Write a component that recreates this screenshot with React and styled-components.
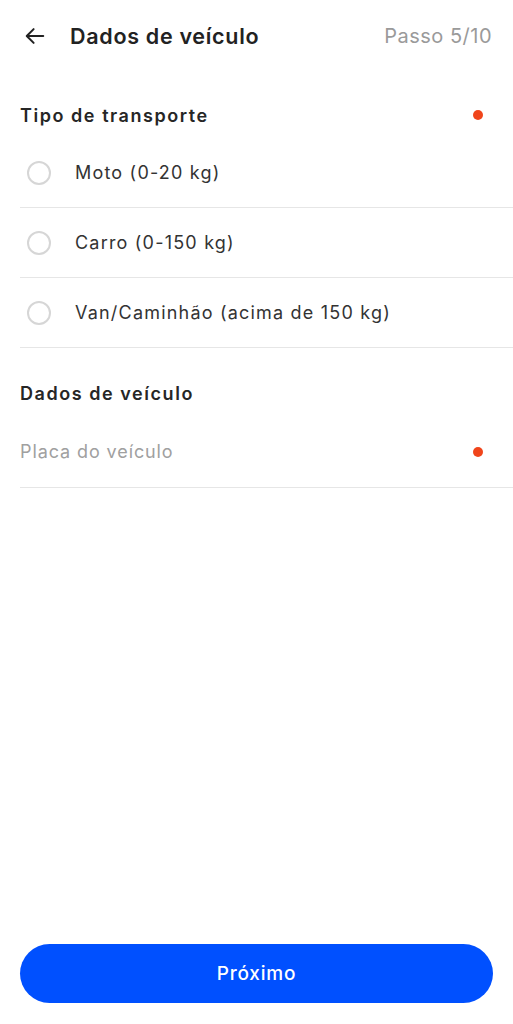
import { useState } from "react";
import styled, { createGlobalStyle } from "styled-components";

const GlobalStyle = createGlobalStyle`
  html, body {
    margin: 0;
    padding: 0;
    background: #ffffff;
  }
  body {
    font-family: Inter, "Noto Sans", sans-serif;
    color: #2b2b2b;
  }
`;

const options = [
  { id: "moto", label: "Moto (0-20 kg)" },
  { id: "carro", label: "Carro (0-150 kg)" },
  { id: "van", label: "Van/Caminhão (acima de 150 kg)" },
];

const App = () => {
  const [selected, setSelected] = useState(null);
  const [plate, setPlate] = useState("");

  return (
    <Screen>
      <GlobalStyle />
      <Header>
        <BackButton aria-label="Voltar">
          <svg width="22" height="22" viewBox="0 0 24 24" fill="none">
            <path
              d="M21 12H3.5M10.5 4.5L3 12l7.5 7.5"
              stroke="#222"
              strokeWidth="2.2"
              strokeLinecap="round"
              strokeLinejoin="round"
            />
          </svg>
        </BackButton>
        <Title>Dados de veículo</Title>
        <Step>Passo 5/10</Step>
      </Header>

      <Section $top={20}>
        <SectionHeader>
          <SectionTitle>Tipo de transporte</SectionTitle>
          <RequiredDot />
        </SectionHeader>
        <OptionList>
          {options.map(option => (
            <OptionRow key={option.id} onClick={() => setSelected(option.id)}>
              <Radio $checked={selected === option.id} />
              <OptionLabel>{option.label}</OptionLabel>
            </OptionRow>
          ))}
        </OptionList>
      </Section>

      <Section $top={22}>
        <SectionHeader>
          <SectionTitle>Dados de veículo</SectionTitle>
        </SectionHeader>
        <InputRow>
          <PlateInput
            placeholder="Placa do veículo"
            value={plate}
            onChange={(e) => setPlate(e.target.value)}
          />
          <RequiredDot />
        </InputRow>
      </Section>

      <Spacer />

      <Footer>
        <NextButton>Próximo</NextButton>
      </Footer>
    </Screen>
  );
};

const Screen = styled.div`
  display: flex;
  flex-direction: column;
  min-height: 1024px;
  box-sizing: border-box;
`;

const Header = styled.div`
  display: flex;
  align-items: center;
  height: 72px;
  padding: 0 21px 0 22px;
`;

const BackButton = styled.button`
  display: flex;
  align-items: center;
  justify-content: center;
  width: 26px;
  height: 26px;
  padding: 0;
  border: none;
  background: none;
  margin-right: 22px;
  cursor: pointer;
`;

const Title = styled.h1`
  flex: 1;
  margin: 0;
  font-size: 21.5px;
  font-weight: 600;
  color: #222;
  letter-spacing: 0.7px;
`;

const Step = styled.span`
  font-size: 20px;
  color: #9a9a9a;
  font-weight: 400;
  letter-spacing: 0.5px;
`;

const Section = styled.div`
  display: flex;
  flex-direction: column;
  padding-left: 20px;
  margin-top: ${p => p.$top}px;
`;

const SectionHeader = styled.div`
  display: flex;
  align-items: center;
  justify-content: space-between;
  padding-right: 30px;
  height: 46px;
`;

const SectionTitle = styled.h2`
  margin: 0;
  font-size: 18px;
  font-weight: 600;
  color: #262626;
  letter-spacing: 1.55px;
`;

const RequiredDot = styled.span`
  width: 10px;
  height: 10px;
  border-radius: 50%;
  background: #f0451b;
  flex-shrink: 0;
`;

const OptionList = styled.div`
  display: flex;
  flex-direction: column;
`;

const OptionRow = styled.label`
  box-sizing: border-box;
  display: flex;
  align-items: center;
  height: 70px;
  border-bottom: 1.5px solid #e6e6e6;
  cursor: pointer;
`;

const Radio = styled.span`
  box-sizing: border-box;
  width: 24px;
  height: 24px;
  margin-left: 7px;
  margin-right: 24px;
  border-radius: 50%;
  border: 2px solid ${p => (p.$checked ? "#0050ff" : "#d6d6d6")};
  box-shadow: ${p => (p.$checked ? "inset 0 0 0 4px #fff" : "none")};
  background: ${p => (p.$checked ? "#0050ff" : "#fff")};
`;

const OptionLabel = styled.span`
  font-size: 18px;
  color: #333;
  letter-spacing: 1.2px;
`;

const InputRow = styled.div`
  box-sizing: border-box;
  display: flex;
  align-items: center;
  height: 72px;
  padding-right: 30px;
  border-bottom: 1.5px solid #e6e6e6;
`;

const PlateInput = styled.input`
  flex: 1;
  border: none;
  outline: none;
  padding: 0;
  font-family: inherit;
  font-size: 18px;
  letter-spacing: 0.9px;
  color: #333;
  background: transparent;
  &::placeholder {
    color: #a0a0a0;
  }
`;

const Spacer = styled.div`
  flex: 1;
`;

const Footer = styled.div`
  padding: 0 20px 21px;
`;

const NextButton = styled.button`
  width: 100%;
  height: 59px;
  border: none;
  border-radius: 30px;
  background: #0050ff;
  color: #fff;
  font-family: inherit;
  font-size: 19px;
  font-weight: 500;
  letter-spacing: 0.8px;
  cursor: pointer;
`;

export default App;
